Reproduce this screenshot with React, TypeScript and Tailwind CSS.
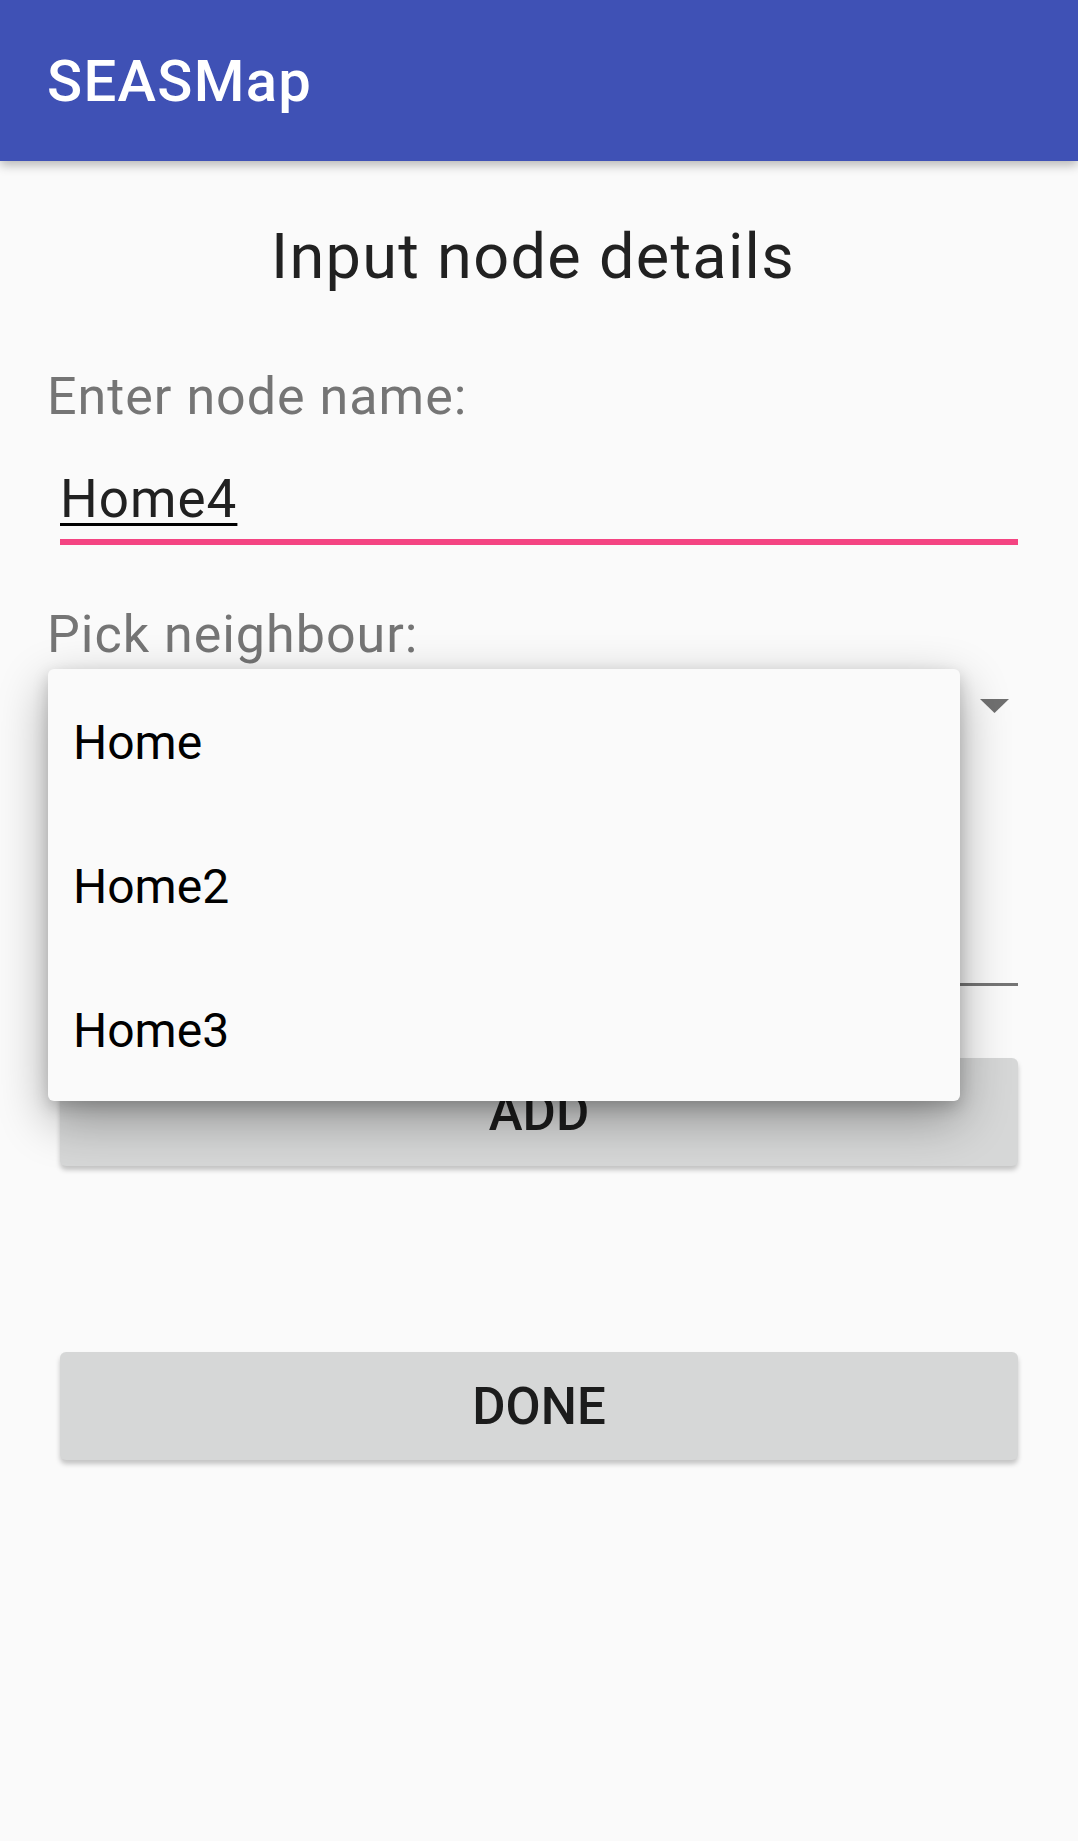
import React from "react";

export default function App() {
  const items = ["Home", "Home2", "Home3"];
  return (
    <div className="min-h-[1841px] w-full bg-[#fafafa] font-['Roboto',sans-serif]">
      <header className="relative z-10 flex h-[161px] items-center bg-[#3f51b5] pl-[47px] shadow-[0_4px_10px_rgba(0,0,0,0.28)]">
        <span className="text-[58px] font-medium leading-none tracking-[1.3px] text-white">SEASMap</span>
      </header>

      <main className="flex flex-col">
        <h1 className="mt-[64px] pr-[12px] text-center text-[63px] font-normal leading-[63px] tracking-[1.3px] text-[#212121]">
          Input node details
        </h1>

        <div className="mt-[83px] pl-[47px] text-[52px] leading-[52px] tracking-[1px] text-[#757575]">
          Enter node name:
        </div>

        <div className="mx-[60px] mt-[50px] flex flex-col">
          <div className="text-[53px] leading-[52px] tracking-[1px] text-[#212121]">
            <span className="underline decoration-[3px] underline-offset-[6px] decoration-black">Home4</span>
          </div>
          <div className="mt-[14px] h-[6px] bg-[#f44482]" />
        </div>

        <div className="mt-[64px] pl-[47px] text-[52px] leading-[52px] tracking-[1px] text-[#757575]">
          Pick neighbour:
        </div>

        <div className="relative mx-[60px] h-[325px] border-b-[3px] border-[#757575]">
          <div className="flex justify-end pr-[9px] pt-[38px]">
            <svg width="29" height="14" viewBox="0 0 29 14">
              <polygon points="0,0 29,0 14.5,14" fill="#707070" />
            </svg>
          </div>

          <div className="absolute left-[-12px] top-[8px] z-20 flex w-[912px] flex-col rounded-[6px] bg-[#fafafa] shadow-[0_18px_50px_rgba(0,0,0,0.33),0_6px_16px_rgba(0,0,0,0.18)]">
            {items.map((it) => (
              <div key={it} className="flex h-[144px] items-center pl-[25px] pt-[4px] text-[48px] leading-none text-black">
                {it}
              </div>
            ))}
          </div>
        </div>

        <button className="mx-[60px] mt-[72px] flex h-[108px] items-center justify-center rounded-[6px] bg-[#d6d7d7] text-[51px] font-medium leading-none text-[#1c1c1c] shadow-[0_4px_5px_rgba(0,0,0,0.22)]">
          ADD
        </button>

        <button className="mx-[60px] mt-[186px] flex h-[108px] items-center justify-center rounded-[6px] bg-[#d6d7d7] text-[51px] font-medium leading-none text-[#1c1c1c] shadow-[0_4px_5px_rgba(0,0,0,0.22)]">
          DONE
        </button>
      </main>
    </div>
  );
}
